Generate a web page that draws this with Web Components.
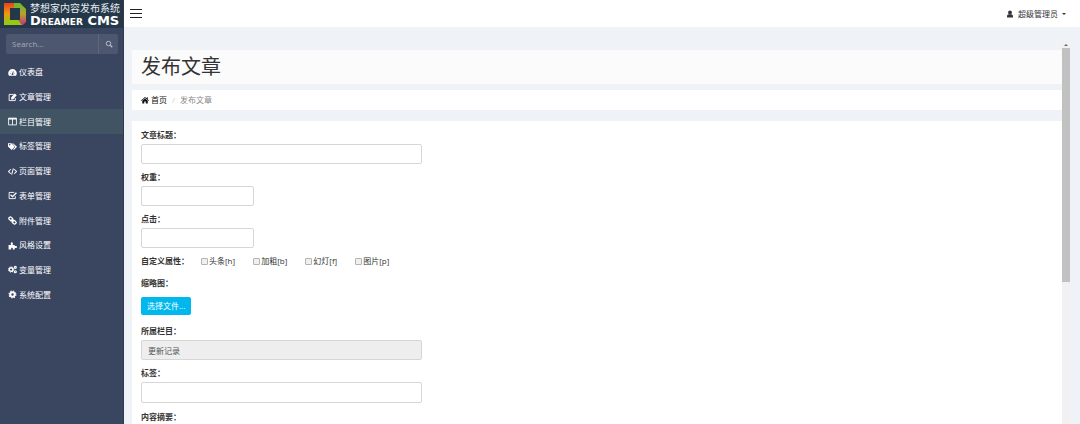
<!DOCTYPE html>
<html lang="zh-CN">
<head>
<meta charset="utf-8">
<title>发布文章</title>
<style>
    html, body {
        margin: 0;
        height: 100%;
    }

    body {
        overflow: hidden;
        background: #eff2f7;
        color: #333;
        font: 8px/12px "Open Sans", "Noto Sans CJK SC", sans-serif;
    }
</style>
</head>
<body>

<cms-shell>
    <cms-sidebar slot="sidebar">
        <cms-menu-item icon="dashboard">仪表盘</cms-menu-item>
        <cms-menu-item icon="edit">文章管理</cms-menu-item>
        <cms-menu-item icon="columns" active>栏目管理</cms-menu-item>
        <cms-menu-item icon="tags">标签管理</cms-menu-item>
        <cms-menu-item icon="code">页面管理</cms-menu-item>
        <cms-menu-item icon="check">表单管理</cms-menu-item>
        <cms-menu-item icon="link">附件管理</cms-menu-item>
        <cms-menu-item icon="puzzle">风格设置</cms-menu-item>
        <cms-menu-item icon="cogs">变量管理</cms-menu-item>
        <cms-menu-item icon="cog">系统配置</cms-menu-item>
    </cms-sidebar>
    <cms-topbar slot="topbar">超级管理员</cms-topbar>

    <cms-page-title>发布文章</cms-page-title>
    <cms-breadcrumb>
        <span slot="home">首页</span>
        <span slot="current">发布文章</span>
    </cms-breadcrumb>
    <cms-panel>
        <cms-field label="文章标题"></cms-field>
        <cms-field label="权重" size="small"></cms-field>
        <cms-field label="点击" size="small"></cms-field>
        <cms-check-group label="自定义属性">
            <cms-check>头条[h]</cms-check>
            <cms-check>加粗[b]</cms-check>
            <cms-check>幻灯[f]</cms-check>
            <cms-check>图片[p]</cms-check>
        </cms-check-group>
        <cms-upload label="缩略图">选择文件...</cms-upload>
        <cms-field label="所属栏目" value="更新记录" disabled></cms-field>
        <cms-field label="标签" size="tags"></cms-field>
        <cms-field label="内容摘要"></cms-field>
    </cms-panel>
</cms-shell>

<script>
const icons = {
    dashboard: '<path d="M8 2a7.5 7.5 0 0 0-6.3 11.6h12.6A7.5 7.5 0 0 0 8 2z"/><path d="M8 11l1.500-5M3.500 9.500h1M5 5.500l.6.600M11.500 9.500h1" stroke="#3a4560" stroke-width="1.500"/><circle cx="8" cy="11" r="1.600" fill="#3a4560"/>',
    edit: '<path d="M13 9v4.500H2v-11h8" fill="none" stroke="currentColor" stroke-width="1.600"/><path d="M5.500 11.500V8L12 1l3.500 3L9 11.500z"/>',
    columns: '<path d="M1 2h14v12H1zM8 3v11" fill="none" stroke="currentColor" stroke-width="1.500"/><path d="M1 2h14v2.500H1z"/>',
    tags: '<path fill-rule="evenodd" d="M0 2h6l6 6-5.500 6L0 8zM3 3.500a1.300 1.300 0 1 0 .1 0z"/><path d="M7.500 2H9l7 6.500-5.500 5.500-1.500-1.200L13 8.500z"/>',
    code: '<path d="M5 4L1 8l4 4M11 4l4 4-4 4M9.500 2.500l-3 11" fill="none" stroke="currentColor" stroke-width="1.800"/>',
    check: '<path d="M13 9v4.500H2v-11h9" fill="none" stroke="currentColor" stroke-width="1.600"/><path d="M4.500 6.500L8 10l7-7" fill="none" stroke="currentColor" stroke-width="2.400"/>',
    link: '<g fill="none" stroke="currentColor" stroke-width="2.200"><rect x="1.500" y="2.500" width="7" height="5" rx="2" transform="rotate(40 5 5)"/><rect x="7.500" y="8.500" width="7" height="5" rx="2" transform="rotate(40 11 11)"/><path d="M6 6l4 4"/></g>',
    puzzle: '<path d="M1 7h4.500c-1-2-.8-5 1.300-5s2.300 3 1.300 5H12v2.500c2-1 4-.6 4 1.200s-2 2.200-4 1.300V15H8.500c.5-2-.3-3-1.500-3s-2 1-1.500 3H1z"/>',
    cogs: '<circle cx="5.500" cy="8" r="3.300" fill="none" stroke="currentColor" stroke-width="2.600"/><circle cx="5.500" cy="8" r="4.900" fill="none" stroke="currentColor" stroke-width="1.400" stroke-dasharray="2 1.850"/><circle cx="13" cy="4.200" r="1.800" fill="none" stroke="currentColor" stroke-width="2"/><circle cx="13" cy="12" r="1.800" fill="none" stroke="currentColor" stroke-width="2"/>',
    cog: '<circle cx="8" cy="8" r="4" fill="none" stroke="currentColor" stroke-width="3.600"/><circle cx="8" cy="8" r="6.200" fill="none" stroke="currentColor" stroke-width="1.800" stroke-dasharray="2.600 2.270"/>',
    search: '<circle cx="7" cy="7" r="4.500" fill="none" stroke="currentColor" stroke-width="2"/><path d="M10 10l4.500 4.500" stroke="currentColor" stroke-width="2.400"/>',
    user: '<circle cx="8" cy="5" r="3.800"/><path d="M2 15v-2.500C2 10 4 8.500 5.500 8.500h5C12 8.500 14 10 14 12.500V15z"/>',
    home: '<path d="M8 2L0 9l1 1 7-6 7 6 1-1-2.500-2.200V2.500h-2V5z"/><path d="M2.500 9.500L8 5l5.500 4.500V15h-4v-4h-3v4h-4z"/>'
}

function icon(name) {
    return `<svg class="icon" viewBox="0 0 16 16" fill="currentColor" aria-hidden="true">${icons[name]}</svg>`
}

class CmsElement extends HTMLElement {
    constructor() {
        super()
        this.attachShadow({mode: 'open'})
    }

    // label text followed by a full width colon centred in its box
    getCaption() {
        return `${this.getAttribute('label')}<span class="colon">：</span>`
    }

    connectedCallback() {
        const template = document.createElement('template')
        template.innerHTML = `
            <style>
                * { box-sizing: border-box; }
                .icon { width: 8px; height: 8px; flex: none; }
                .colon { font-family: "Noto Sans CJK TC", sans-serif; line-height: 1; }
                input, button { font: inherit; color: inherit; margin: 0; }
                a { color: inherit; text-decoration: none; }
                label { font-weight: bold; }
                ${this.getStyles()}
            </style>
            ${this.getTemplate()}
        `
        this.shadowRoot.appendChild(template.content.cloneNode(true))
    }
}

class CmsShell extends CmsElement {
    getTemplate() {
        return `
            <slot name="sidebar"></slot>
            <div class="body">
                <slot name="topbar"></slot>
                <div class="scroller">
                    <main><slot></slot></main>
                    <div class="track"><i class="up"></i><i class="thumb"></i></div>
                </div>
            </div>
        `
    }

    getStyles() {
        return `
            :host { display: flex; height: 100vh; }
            .body { flex: 1; min-width: 0; display: flex; flex-direction: column; }
            .scroller { flex: 1; min-height: 0; display: flex; padding: 14px 10px 0 8px; }
            main { flex: 1; min-width: 0; padding-top: 9px; overflow: hidden; }
            .track { width: 8px; display: flex; flex-direction: column; align-items: center; background: #f1f1f1; }
            .up { margin: 3px 0 2px; border: 2px solid transparent; border-top: 0; border-bottom-color: #666; }
            .thumb { width: 8px; height: 61%; background: #c1c1c1; }
        `
    }
}

class CmsSidebar extends CmsElement {
    getTemplate() {
        return `
            <a class="brand" href="#">
                <svg class="logo" viewBox="0 0 24 24" aria-hidden="true">
                    <defs>
                        <linearGradient id="left" x1="0" y1="0" x2="0" y2="1">
                            <stop offset="0" stop-color="#e8421c"/>
                            <stop offset=".5" stop-color="#f09a12"/>
                            <stop offset="1" stop-color="#8cc21c"/>
                        </linearGradient>
                        <linearGradient id="right" x1="0" y1="0" x2="0" y2="1">
                            <stop offset="0" stop-color="#5fbf2c"/>
                            <stop offset=".5" stop-color="#b8a030"/>
                            <stop offset="1" stop-color="#c2307c"/>
                        </linearGradient>
                    </defs>
                    <path d="M1 1h10v5H7v12h4v5H1z" fill="url(#left)"/>
                    <path d="M11 1h6l6 6v13l-3 3h-9v-5h6V6h-6z" fill="url(#right)"/>
                    <path d="M1 17l6 1h8l4 5H1z" fill="#98c814"/>
                </svg>
                <span class="names">
                    <span class="cn">梦想家内容发布系统</span>
                    <span class="en">Dreamer CMS</span>
                </span>
            </a>
            <form class="search">
                <input type="text" placeholder="Search..." aria-label="Search">
                <button type="button" aria-label="Search">${icon('search')}</button>
            </form>
            <nav><slot></slot></nav>
        `
    }

    getStyles() {
        return `
            :host { display: block; box-sizing: border-box; width: 124px; flex: none; background: #3a4560; color: #fff; border-right: 1px solid #2f3a50; }
            .brand { display: flex; align-items: center; gap: 3px; height: 28px; padding-left: 3px; background: #25384a; }
            .logo { width: 24px; height: 24px; flex: none; }
            .names { display: flex; flex-direction: column; white-space: nowrap; }
            .cn { font-size: 10px; line-height: 14px; color: #e4eaee; }
            .en { font: bold small-caps 13px/12px "DejaVu Sans", sans-serif; }
            .search { display: flex; height: 20px; margin: 6px 5px 6px 6px; background: #4d5770; border-radius: 2px; color: #b4bac8; }
            .search input { flex: 1; min-width: 0; padding: 0 6px; border: 0; background: none; }
            .search input::placeholder { color: #a3aabb; }
            .search button { width: 20px; padding: 0; border: 0; border-left: 1px solid #5d667e; background: none; display: grid; place-items: center; }
            nav { display: grid; grid-auto-rows: 1fr; height: 247px; }
        `
    }
}

class CmsMenuItem extends CmsElement {
    getTemplate() {
        return `<a href="#">${icon(this.getAttribute('icon'))}<slot></slot></a>`
    }

    getStyles() {
        return `
            :host { display: block; }
            :host([active]) { background: #415463; }
            a { display: flex; align-items: center; gap: 2px; height: 100%; padding-left: 8px; }
            .icon { width: 9px; height: 9px; }
        `
    }
}

class CmsTopbar extends CmsElement {
    getTemplate() {
        return `
            <button class="toggle" aria-label="菜单"><i></i><i></i><i></i></button>
            <button class="user">${icon('user')}<slot></slot><i class="caret"></i></button>
        `
    }

    getStyles() {
        return `
            :host { display: flex; justify-content: space-between; align-items: center; height: 27px; padding: 0 14px 0 6px; background: #fff; box-sizing: border-box; }
            button { padding: 0; border: 0; background: none; }
            .toggle { display: grid; gap: 3px; width: 12px; }
            .toggle i { height: 1px; background: #222; }
            .user { display: flex; align-items: center; gap: 4px; }
            .caret { border: 2px solid transparent; border-top-color: #333; border-bottom: 0; }
        `
    }
}

class CmsPageTitle extends CmsElement {
    getTemplate() {
        return `<h1><slot></slot></h1>`
    }

    getStyles() {
        return `
            :host { display: block; background: #fbfbfb; }
            h1 { margin: 0; padding: 0 9px; font-size: 20px; line-height: 34px; font-weight: normal; }
        `
    }
}

class CmsBreadcrumb extends CmsElement {
    getTemplate() {
        return `
            <a href="#">${icon('home')}<slot name="home"></slot></a>
            <span class="sep">/</span>
            <span class="current"><slot name="current"></slot></span>
        `
    }

    getStyles() {
        return `
            :host { display: flex; align-items: center; gap: 5px; height: 20px; margin-top: 6px; padding: 0 9px; background: #fff; }
            a { display: flex; align-items: center; gap: 2px; color: #111; }
            .sep { color: #ccc; }
            .current { color: #888; }
        `
    }
}

class CmsPanel extends CmsElement {
    getTemplate() {
        return `<slot></slot>`
    }

    getStyles() {
        return `:host { display: block; margin-top: 11px; padding: 8px 9px; background: #fff; }`
    }
}

class CmsField extends CmsElement {
    getTemplate() {
        const disabled = this.hasAttribute('disabled') ? 'disabled' : ''
        return `
            <label for="field">${this.getCaption()}</label>
            <input id="field" type="text" value="${this.getAttribute('value') || ''}" ${disabled}>
        `
    }

    getStyles() {
        return `
            :host { display: grid; gap: 3px; margin-bottom: 7px; }
            label { height: 12px; }
            input { width: 281px; max-width: 100%; height: 20px; padding: 0 6px; border: 1px solid #d6d6d6; border-radius: 2px; background: #fff; color: #555; }
            input:disabled { background: #eee; }
            :host([size="small"]) input { width: 113px; }
            :host([size="tags"]) { margin-bottom: 8px; }
            :host([size="tags"]) input { height: 21px; }
        `
    }
}

class CmsCheckGroup extends CmsElement {
    getTemplate() {
        return `
            <fieldset aria-labelledby="caption">
                <span id="caption">${this.getCaption()}</span>
                <slot></slot>
            </fieldset>
        `
    }

    getStyles() {
        return `
            :host { display: block; margin-bottom: 10px; }
            fieldset { display: flex; gap: 18px; height: 12px; margin: 0; padding: 0; border: 0; }
            #caption { font-weight: bold; margin-right: -6px; }
        `
    }
}

class CmsCheck extends CmsElement {
    getTemplate() {
        return `<label><input type="checkbox"><slot></slot></label>`
    }

    getStyles() {
        return `
            :host { display: block; }
            label { display: flex; align-items: center; gap: 1px; font-weight: normal; }
            input { appearance: none; width: 7px; height: 7px; border: 1px solid #b4b4b4; border-radius: 1px; background: #f0f0f0; }
            input:checked { background: #00b7ee; }
        `
    }
}

class CmsUpload extends CmsElement {
    getTemplate() {
        return `
            <span id="caption">${this.getCaption()}</span>
            <button type="button" aria-describedby="caption"><slot></slot></button>
        `
    }

    getStyles() {
        return `
            :host { display: grid; gap: 8px; justify-items: start; margin-bottom: 10px; }
            #caption { height: 12px; font-weight: bold; }
            button { height: 18px; padding: 0 6px; border: 0; border-radius: 2px; background: #00b7ee; color: #fff; }
        `
    }
}

customElements.define('cms-shell', CmsShell)
customElements.define('cms-sidebar', CmsSidebar)
customElements.define('cms-menu-item', CmsMenuItem)
customElements.define('cms-topbar', CmsTopbar)
customElements.define('cms-page-title', CmsPageTitle)
customElements.define('cms-breadcrumb', CmsBreadcrumb)
customElements.define('cms-panel', CmsPanel)
customElements.define('cms-field', CmsField)
customElements.define('cms-check-group', CmsCheckGroup)
customElements.define('cms-check', CmsCheck)
customElements.define('cms-upload', CmsUpload)
</script>
</body>
</html>
